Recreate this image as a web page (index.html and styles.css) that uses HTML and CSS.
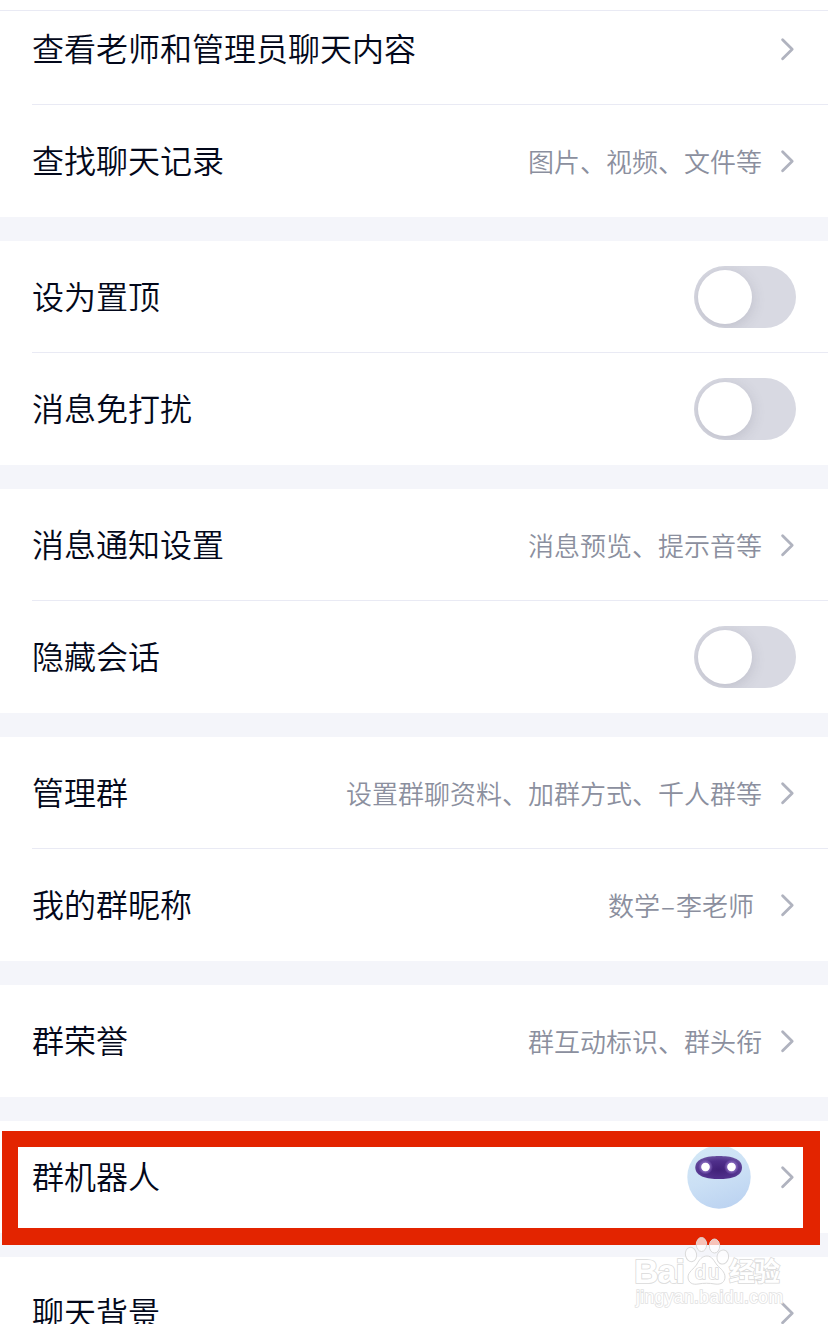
FILE: index.html
```html
<!DOCTYPE html>
<html lang="zh-CN">
<head>
<meta charset="utf-8">
<title>群聊设置</title>
<link rel="stylesheet" href="styles.css">
</head>
<body>
<svg width="0" height="0" class="defs"><symbol id="chevron" viewBox="0 0 16 24"><path d="M2.6 2.8 12.2 12.3 2.6 21.8" fill="none" stroke="#b0b3bf" stroke-width="2.8" stroke-linecap="round" stroke-linejoin="round"/></symbol></svg>
<main class="page">
  <div class="top-edge"></div>
  <section class="group">
    <div class="row row-first"><span class="label">查看老师和管理员聊天内容</span><svg class="chevron"><use href="#chevron"/></svg></div>
    <div class="row"><span class="label">查找聊天记录</span><span class="value">图片、视频、文件等</span><svg class="chevron"><use href="#chevron"/></svg></div>
  </section>
  <section class="group">
    <div class="row"><span class="label">设为置顶</span><span class="switch"><span class="knob"></span></span></div>
    <div class="row"><span class="label">消息免打扰</span><span class="switch"><span class="knob"></span></span></div>
  </section>
  <section class="group">
    <div class="row"><span class="label">消息通知设置</span><span class="value">消息预览、提示音等</span><svg class="chevron"><use href="#chevron"/></svg></div>
    <div class="row"><span class="label">隐藏会话</span><span class="switch"><span class="knob"></span></span></div>
  </section>
  <section class="group">
    <div class="row"><span class="label">管理群</span><span class="value">设置群聊资料、加群方式、千人群等</span><svg class="chevron"><use href="#chevron"/></svg></div>
    <div class="row"><span class="label">我的群昵称</span><span class="value nickname">数学<span class="dash">–</span>李老师</span><svg class="chevron"><use href="#chevron"/></svg></div>
  </section>
  <section class="group">
    <div class="row"><span class="label">群荣誉</span><span class="value">群互动标识、群头衔</span><svg class="chevron"><use href="#chevron"/></svg></div>
  </section>
  <section class="group">
    <div class="row"><span class="label">群机器人</span>
      <svg class="avatar" viewBox="0 0 64 64">
        <defs>
          <linearGradient id="face" x1="0.3" y1="0" x2="0.65" y2="1"><stop offset="0" stop-color="#d3e8f6"/><stop offset=".5" stop-color="#cbe0f5"/><stop offset="1" stop-color="#bcd3f1"/></linearGradient>
          <radialGradient id="visor" cx=".5" cy=".6" r=".6"><stop offset="0" stop-color="#402078"/><stop offset=".65" stop-color="#50308c"/><stop offset="1" stop-color="#68509f"/></radialGradient>
          <radialGradient id="glow"><stop offset=".45" stop-color="#fff"/><stop offset=".6" stop-color="#a78cd8" stop-opacity=".6"/><stop offset="1" stop-color="#a080dc" stop-opacity="0"/></radialGradient>
        </defs>
        <circle cx="32" cy="32" r="31.7" fill="url(#face)"/>
        <g transform="translate(0 2)">
          <path d="M8.3 20.5C8.3 11.5 20 9 32 9s23 2.5 23 11.5S44 32 32 32 8.3 29.5 8.3 20.5Z" fill="url(#visor)"/>
          <circle cx="18.5" cy="20" r="7.5" fill="url(#glow)"/><circle cx="44.5" cy="20" r="7.5" fill="url(#glow)"/>
          <circle cx="18.5" cy="20" r="4.2" fill="#fff"/><circle cx="44.5" cy="20" r="4.2" fill="#fff"/>
        </g>
      </svg>
      <svg class="chevron"><use href="#chevron"/></svg></div>
  </section>
  <section class="group">
    <div class="row"><span class="label">聊天背景</span><svg class="chevron"><use href="#chevron"/></svg></div>
  </section>
  <div class="highlight"></div>
  <svg class="watermark" viewBox="0 0 160 76">
    <g class="mark">
      <ellipse cx="61" cy="19.5" rx="5.6" ry="7.2" transform="rotate(-12 61 19.5)"/>
      <ellipse cx="71.5" cy="9.5" rx="5.2" ry="7"/>
      <ellipse cx="84.5" cy="11" rx="5.2" ry="7"/>
      <ellipse cx="92.8" cy="22" rx="5.8" ry="7" transform="rotate(10 92.8 22)"/>
      <path d="M77 21c-5 0-8 4-10 8-3 5-9 8-9 13 0 6 5 8 10 7 6-1 11-1 17 0 6 1 10-2 10-7s-4-8-8-12c-3-4-5-9-10-9Z"/>
      <text class="brand" x="4" y="48" textLength="51">Bai</text>
      <text class="du" x="65" y="44" textLength="24">du</text>
      <text class="exp" x="99" y="46" textLength="51">经验</text>
      <text class="site" x="6" y="68" textLength="147">jingyan.baidu.com</text>
    </g>
  </svg>
</main>
</body>
</html>
```
FILE: styles.css
```css
* { box-sizing: border-box; }
body {
  margin: 0;
  background: #fff;
  font-family: "Noto Sans CJK SC", sans-serif;
}
.defs { position: absolute; }
.page {
  position: relative;
  height: 1324px;
  overflow: hidden;
  background: #f4f5fa;
}
.top-edge {
  height: 11px;
  background: #fff;
  border-bottom: 1px solid #e9eaf4;
}
.group { background: #fff; }
.group + .group { margin-top: 24px; }
.row {
  position: relative;
  display: flex;
  align-items: center;
  height: 112px;
  padding: 0 32px;
}
.row-first { height: 94px; padding-bottom: 18px; }
.row:not(:last-child)::after {
  content: "";
  position: absolute;
  left: 32px;
  right: 0;
  bottom: 0;
  height: 1px;
  background: #e9eaf4;
}
.label {
  margin-right: auto;
  padding-bottom: 4px;
  font-size: 32px;
  line-height: 46px;
  font-weight: 350;
  color: #03081a;
}
.value {
  margin-right: 16px;
  font-size: 26px;
  line-height: 40px;
  font-weight: 350;
  color: #8b8f9e;
}
.nickname { margin-right: 24px; }
.dash { padding: 0 1px; }
.chevron { width: 16px; height: 24px; }
.value + .chevron { margin-left: 2px; }
.switch {
  display: flex;
  width: 102px;
  height: 62px;
  padding: 4px;
  border-radius: 31px;
  background: #d8d9e2;
  overflow: hidden;
}
.knob {
  width: 54px;
  height: 54px;
  border-radius: 50%;
  background: #fff;
  box-shadow: 0 3px 14px rgba(70, 70, 95, .18);
}
.avatar { width: 64px; height: 64px; margin-right: 29px; }
.highlight {
  position: absolute;
  left: 2px;
  top: 1131px;
  width: 818px;
  height: 114px;
  border: 16px solid #e32400;
  border-bottom-width: 17px;
  border-right-width: 17px;
}
.watermark {
  position: absolute;
  left: 630px;
  top: 1235px;
  width: 160px;
  height: 76px;
}
.mark {
  fill: rgba(255, 255, 255, .72);
  stroke: #dadada;
  stroke-width: 1;
}
.mark text { font-family: "Liberation Sans", "Noto Sans CJK SC", sans-serif; paint-order: stroke; stroke-width: 1.6; fill: #fff; }
.mark .brand { font-size: 34px; font-weight: 700; }
.mark .du { font-size: 20px; }
.mark .exp { font-size: 26px; font-weight: 700; }
.mark .site { font-size: 17.5px; stroke: #e2e2e2; }
```
